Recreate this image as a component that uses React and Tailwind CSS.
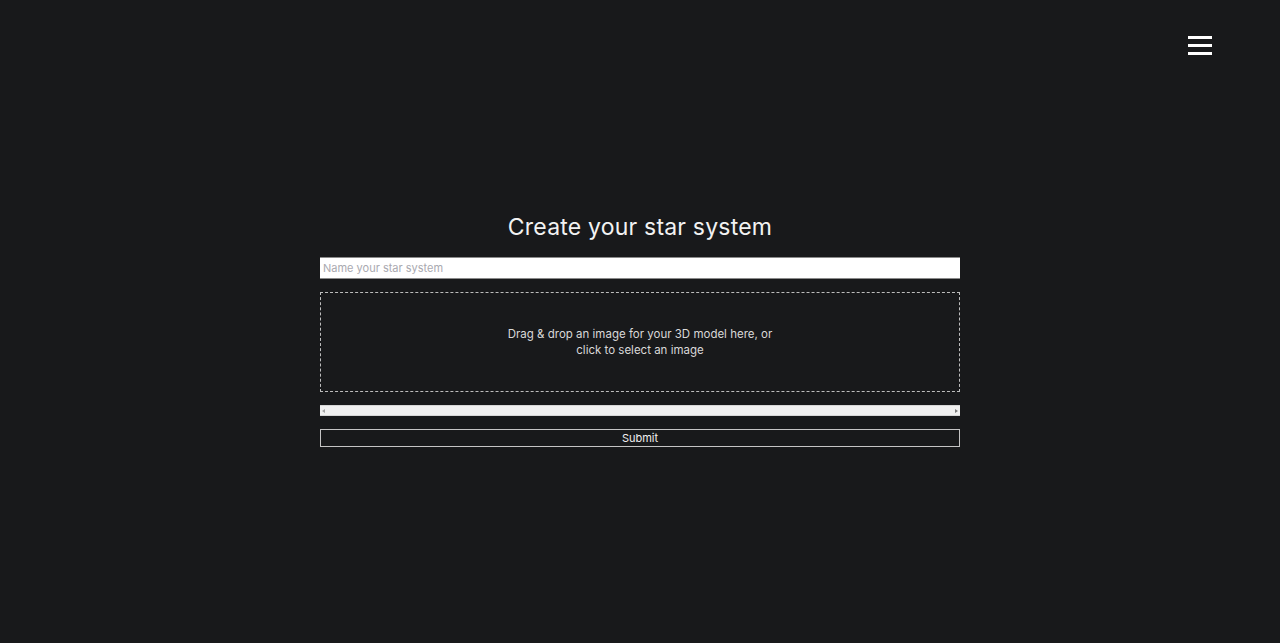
import { useState } from "react";

const font = { fontFamily: "Inter, 'Noto Sans', sans-serif" };

const App = () => {
  const [name, setName] = useState("");

  return (
    <div
      className="min-h-screen w-full bg-[#18191b] text-white font-['Inter','Noto_Sans',sans-serif]"
      style={font}
    >
      {/* Menu */}
      <div className="flex justify-end pt-[36px] pr-[68px]">
        <button className="flex flex-col gap-[5px] w-[24px]">
          <span className="block h-[3px] w-[24px] bg-white" />
          <span className="block h-[3px] w-[24px] bg-white" />
          <span className="block h-[3px] w-[24px] bg-white" />
        </button>
      </div>

      {/* Form */}
      <div className="mx-auto w-[640px] pt-[157px] flex flex-col">
        <h1 className="text-center text-[23px] leading-[30px] font-normal text-[#f2f2f2] tracking-[0.2px]">
          Create your star system
        </h1>

        <input
          value={name}
          onChange={(e) => setName(e.target.value)}
          placeholder="Name your star system"
          className="mt-[15px] h-[22px] w-full bg-white border-t border-b border-[#8a8a8a] px-[3px] text-[11px] text-black placeholder:text-[#a9a9b0] outline-none"
        />

        <div className="mt-[13px] h-[100px] border border-dashed border-[#bdbdbd] flex items-center justify-center">
          <p className="text-center text-[11.5px] leading-[16px] text-[#d8d8d8]">
            Drag &amp; drop an image for your 3D model here, or
            <br />
            click to select an image
          </p>
        </div>

        {/* Scroll bar */}
        <div className="mt-[13px] h-[11px] bg-[#f0f0f0] border-t border-b border-[#d6d6d6] flex items-center justify-between px-[2px]">
          <span className="w-0 h-0 border-y-[2.5px] border-y-transparent border-r-[3px] border-r-[#a3a3a3]" />
          <span className="w-0 h-0 border-y-[2.5px] border-y-transparent border-l-[3px] border-l-[#7a7a7a]" />
        </div>

        <button className="mt-[13px] h-[18px] w-full border border-[#c4c4c4] bg-[#18191b] text-[11px] leading-[16px] text-[#f0f0f0]">
          Submit
        </button>
      </div>
    </div>
  );
};

export default App;
